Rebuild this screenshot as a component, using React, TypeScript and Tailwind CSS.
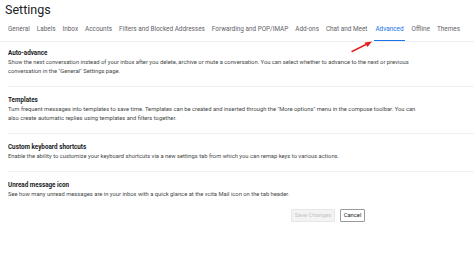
import React from "react";

const tabs = [
  "General",
  "Labels",
  "Inbox",
  "Accounts",
  "Filters and Blocked Addresses",
  "Forwarding and POP/IMAP",
  "Add-ons",
  "Chat and Meet",
  "Advanced",
  "Offline",
  "Themes",
];

const sections = [
  {
    title: "Auto-advance",
    lines: [
      "Show the next conversation instead of your inbox after you delete, archive or mute a conversation. You can select whether to advance to the next or previous",
      'conversation in the "General" Settings page.',
    ],
  },
  {
    title: "Templates",
    lines: [
      'Turn frequent messages into templates to save time. Templates can be created and inserted through the "More options" menu in the compose toolbar. You can',
      "also create automatic replies using templates and filters together.",
    ],
  },
  {
    title: "Custom keyboard shortcuts",
    lines: [
      "Enable the ability to customize your keyboard shortcuts via a new settings tab from which you can remap keys to various actions.",
    ],
  },
  {
    title: "Unread message icon",
    lines: [
      "See how many unread messages are in your inbox with a quick glance at the vcita Mail icon on the tab header.",
    ],
  },
];

export default function App() {
  return (
    <div className="relative h-[253px] w-[474px] overflow-hidden bg-white font-['Roboto',sans-serif] text-[#202124]">
      <h1 className="pl-[5px] pt-[2px] text-[12.5px] leading-[16px] text-[#202124]">Settings</h1>

      <nav className="mt-[6px] flex border-b border-[#eeeeee] pl-[8px] gap-[7px] text-[6.4px] text-[#5f6368]">
        {tabs.map((t) => (
          <span
            key={t}
            className={
              t === "Advanced"
                ? "border-b-[1.5px] border-[#1a73e8] px-[1px] pb-[5px] pt-[1px] text-[#1a73e8]"
                : "border-b-[1.5px] border-transparent pb-[5px] pt-[1px]"
            }
          >
            {t}
          </span>
        ))}
      </nav>

      <div className="pl-[8px] pt-[7px]">
        {sections.map((s, i) => (
          <div
            key={s.title}
            className={
              i < sections.length - 1
                ? "mb-[9px] border-b border-[#f0f0f0] pb-[10px]"
                : "pb-[10px]"
            }
          >
            <div className="text-[6.3px] font-bold leading-[9px] text-[#202124]">{s.title}</div>
            {s.lines.map((l) => (
              <div key={l} className="whitespace-nowrap text-[5.8px] leading-[9px] text-[#444746]">
                {l}
              </div>
            ))}
          </div>
        ))}
      </div>

      <div className="flex gap-[5px] pl-[291px]">
        <button className="h-[13px] w-[44px] rounded-[1px] border border-[#e6e6e6] bg-[#f3f3f3] text-[5.8px] text-[#c4c4c4]">
          Save Changes
        </button>
        <button className="h-[13px] w-[25px] rounded-[1px] border border-[#9a9a9a] bg-white text-[5.8px] text-[#202124]">
          Cancel
        </button>
      </div>

      <svg className="absolute left-[350px] top-[40px]" width="24" height="14" viewBox="0 0 24 14">
        <line x1="2" y1="11.5" x2="17" y2="4" stroke="#e0201f" strokeWidth="1.4" strokeLinecap="round" />
        <polygon points="22,1.5 14.5,2.5 17.5,7" fill="#e0201f" />
      </svg>
    </div>
  );
}
